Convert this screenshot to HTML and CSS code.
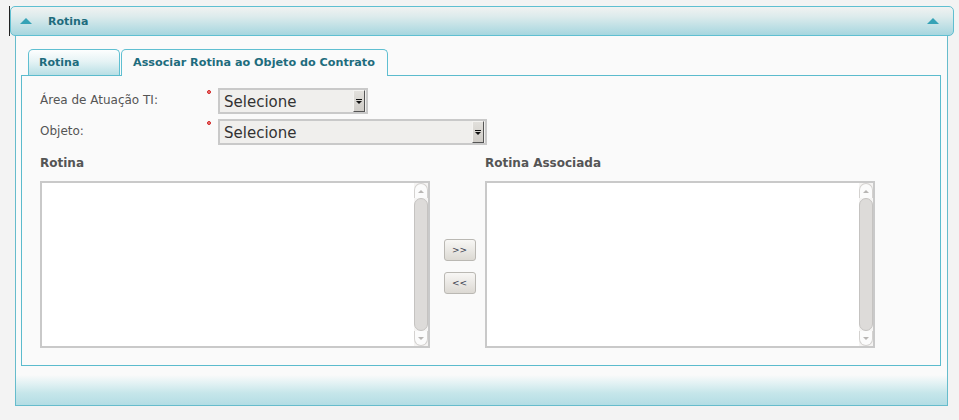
FILE: index.html
```html
<!DOCTYPE html>
<html lang="pt">
<head>
<meta charset="utf-8">
<title>Rotina</title>
<link rel="stylesheet" href="styles.css">
</head>
<body>
<div class="portlet">
  <div class="portlet-header">
    <span class="tri"></span>
    <span class="portlet-title">Rotina</span>
    <span class="tri tri-right"></span>
  </div>
  <div class="portlet-body">
    <div class="tabs">
      <div class="tab tab-first">Rotina</div>
      <div class="tab tab-active">Associar Rotina ao Objeto do Contrato</div>
    </div>
    <div class="tab-panel">
      <div class="form-row">
        <span class="label">Área de Atuação TI:</span>
        <span class="req"></span>
        <div class="select select-small">
          <span class="select-text">Selecione</span>
          <span class="select-btn"><svg width="6" height="5" viewBox="0 0 6 5"><rect x="0" y="0" width="6" height="1" fill="#111"/><path d="M0 2 H6 L3 5 Z" fill="#111"/></svg></span>
        </div>
      </div>
      <div class="form-row">
        <span class="label">Objeto:</span>
        <span class="req"></span>
        <div class="select select-large">
          <span class="select-text">Selecione</span>
          <span class="select-btn"><svg width="6" height="5" viewBox="0 0 6 5"><rect x="0" y="0" width="6" height="1" fill="#111"/><path d="M0 2 H6 L3 5 Z" fill="#111"/></svg></span>
        </div>
      </div>
      <div class="lists">
        <div class="list-col">
          <div class="list-title">Rotina</div>
          <div class="listbox">
            <div class="list-content"></div>
            <div class="scrollbar">
              <div class="sb-btn sb-up"><span class="sb-arrow-up"></span></div>
              <div class="sb-thumb"></div>
              <div class="sb-btn sb-down"><span class="sb-arrow-down"></span></div>
            </div>
          </div>
        </div>
        <div class="move-col">
          <button class="move-btn">&gt;&gt;</button>
          <button class="move-btn">&lt;&lt;</button>
        </div>
        <div class="list-col">
          <div class="list-title">Rotina Associada</div>
          <div class="listbox">
            <div class="list-content"></div>
            <div class="scrollbar">
              <div class="sb-btn sb-up"><span class="sb-arrow-up"></span></div>
              <div class="sb-thumb"></div>
              <div class="sb-btn sb-down"><span class="sb-arrow-down"></span></div>
            </div>
          </div>
        </div>
      </div>
    </div>
    <div class="portlet-footer"></div>
  </div>
</div>
</body>
</html>
```

FILE: styles.css
```css
html, body {
  margin: 0;
  padding: 0;
}
body {
  background: #f3f3f3;
  font-family: "DejaVu Sans", "Liberation Sans", sans-serif;
  width: 959px;
  height: 420px;
  overflow: hidden;
}
.portlet {
  margin: 6px 0 0 10px;
  width: 944px;
}
.portlet-header {
  position: relative;
  box-sizing: border-box;
  height: 30px;
  border: 1px solid #5fbfd1;
  border-radius: 5px;
  background: linear-gradient(to bottom, #f1f2f1 0%, #dcebec 35%, #a6d6df 100%);
  display: flex;
  align-items: center;
  padding: 0 14px 0 9px;
}
.portlet-header::before {
  content: "";
  position: absolute;
  left: -2px;
  top: -1px;
  width: 1px;
  height: 30px;
  background: #222;
}
.tri {
  width: 0;
  height: 0;
  border-left: 6px solid transparent;
  border-right: 6px solid transparent;
  border-bottom: 6px solid #35a2b6;
  margin-top: -1px;
}
.tri-right {
  margin-left: auto;
}
.portlet-title {
  margin-left: 16px;
  font-weight: bold;
  font-size: 11px;
  color: #1e6c7d;
}
.portlet-body {
  box-sizing: border-box;
  margin: 0 6px 0 5px;
  border: 1px solid #66bccc;
  border-top: none;
  background: #fafafa;
  padding: 13px 6px 0 5px;
  height: 370px;
}
.tabs {
  display: flex;
  align-items: flex-end;
  height: 26px;
  margin-left: 7px;
  gap: 1px;
}
.tab {
  box-sizing: border-box;
  height: 26px;
  border: 1px solid #5fbfd1;
  border-bottom: none;
  border-radius: 5px 5px 0 0;
  font-size: 11px;
  font-weight: bold;
  color: #1e6c7d;
  display: flex;
  align-items: center;
  padding: 0 10px 1px 10px;
}
.tab-first {
  width: 92px;
  background: linear-gradient(to bottom, #fdfefe 0%, #e6f3f5 45%, #b8dfe5 100%);
}
.tab-active {
  width: 267px;
  height: 27px;
  margin-bottom: -1px;
  position: relative;
  z-index: 1;
  background: #fafafa;
  padding-left: 11px;
  font-size: 11.2px;
}
.tab-panel {
  box-sizing: border-box;
  height: 291px;
  border: 1px solid #5bbbcd;
  padding: 12px 0 0 18px;
}
.form-row {
  display: flex;
  align-items: flex-start;
  height: 26px;
  margin-bottom: 5px;
}
.label {
  width: 167px;
  font-size: 12px;
  color: #555;
  line-height: 25px;
}
.req {
  width: 4px;
  height: 4px;
  box-sizing: border-box;
  border: 1px solid #d02020;
  border-radius: 50%;
  background: #f08080;
  margin: 2px 7px 0 0;
}
.select {
  box-sizing: border-box;
  height: 26px;
  border: 2px solid #c9c9c9;
  background: #f0efed;
  display: flex;
  align-items: center;
}
.select-small { width: 150px; }
.select-large { width: 269px; }
.select-text {
  flex: 1;
  padding-left: 4px;
  font-size: 15px;
  color: #333;
  line-height: 22px;
  padding-top: 1px;
}
.select-btn {
  box-sizing: border-box;
  width: 12px;
  height: 22px;
  background: linear-gradient(to bottom, #e2e0dc, #cfccc7);
  border-top: 1px solid #f4f3f1;
  border-left: 1px solid #f4f3f1;
  border-right: 1px solid #555;
  border-bottom: 1px solid #555;
  display: flex;
  align-items: center;
  justify-content: center;
  margin-right: 1px;
}
.lists {
  display: flex;
  margin-top: 10px;
}
.list-col {
  width: 390px;
  display: flex;
  flex-direction: column;
}
.list-title {
  font-size: 12px;
  font-weight: bold;
  color: #555;
  line-height: 16px;
  height: 16px;
  margin-bottom: 10px;
}
.listbox {
  box-sizing: border-box;
  height: 167px;
  border: 2px solid #c9c9c9;
  background: #fff;
  display: flex;
}
.list-content {
  flex: 1;
}
.scrollbar {
  width: 14px;
  display: flex;
  flex-direction: column;
  background: #f5f4f3;
}
.sb-btn {
  box-sizing: border-box;
  height: 15px;
  background: #fbfbfb;
  border: 1px solid #d4d2d0;
  display: flex;
  align-items: center;
  justify-content: center;
}
.sb-up {
  border-radius: 7px 7px 0 0;
  border-bottom: none;
}
.sb-down {
  border-radius: 0 0 7px 7px;
  border-top: none;
}
.sb-arrow-up {
  width: 0;
  height: 0;
  border-left: 3px solid transparent;
  border-right: 3px solid transparent;
  border-bottom: 3px solid #b8b6b4;
}
.sb-arrow-down {
  width: 0;
  height: 0;
  border-left: 3px solid transparent;
  border-right: 3px solid transparent;
  border-top: 3px solid #b8b6b4;
}
.sb-thumb {
  flex: 1;
  box-sizing: border-box;
  background: #dddbd9;
  border: 1px solid #c5c3c1;
  border-radius: 7px;
}
.move-col {
  width: 55px;
  display: flex;
  flex-direction: column;
  align-items: center;
  justify-content: center;
  gap: 11px;
  padding: 29px 0 0 4px;
  box-sizing: border-box;
}
.move-btn {
  box-sizing: border-box;
  width: 32px;
  height: 22px;
  border: 1px solid #bab8b3;
  border-radius: 3px;
  background: linear-gradient(to bottom, #f8f7f5, #dcd9d3);
  font-family: "DejaVu Sans", sans-serif;
  font-size: 9px;
  color: #3a4050;
  padding: 0;
  line-height: 20px;
}
.portlet-footer {
  height: 39px;
  margin: 0 -6px 0 -5px;
  background: linear-gradient(to bottom, #fafafa 0px, #fafafa 9px, #e3f2f4 17px, #c6e6ea 27px, #b3dde4 39px);
}
```
